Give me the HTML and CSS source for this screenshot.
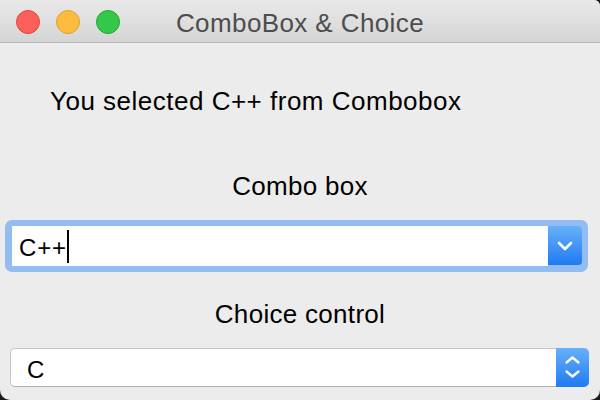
FILE: index.html
```html
<!DOCTYPE html>
<html>
<head>
<meta charset="utf-8">
<link rel="stylesheet" href="styles.css">
</head>
<body>
<div class="window">
  <div class="titlebar">
    <div class="lights">
      <span class="light red"></span>
      <span class="light yellow"></span>
      <span class="light green"></span>
    </div>
    <div class="title">ComboBox &amp; Choice</div>
    <div></div>
  </div>
  <div class="content">
    <div class="status">You selected C++ from Combobox</div>
    <div class="label combo-label">Combo box</div>
    <div class="combo-ring">
      <div class="combo-field">
        <span class="combo-text">C++</span><span class="caret"></span>
      </div>
      <div class="combo-btn">
        <svg width="34" height="39" viewBox="0 0 34 39"><path d="M11 17 L17 23 L23 17" fill="none" stroke="#fff" stroke-width="2.6" stroke-linecap="round" stroke-linejoin="round"/></svg>
      </div>
    </div>
    <div class="label choice-label">Choice control</div>
    <div class="choice">
      <div class="choice-field"><span class="choice-text">C</span></div>
      <div class="choice-btn">
        <svg width="33" height="39" viewBox="0 0 33 39"><path d="M10.5 14.5 L16.5 9.5 L22.5 14.5 M10.5 23.5 L16.5 28.5 L22.5 23.5" fill="none" stroke="#fff" stroke-width="2.3" stroke-linecap="round" stroke-linejoin="round"/></svg>
      </div>
    </div>
  </div>
</div>
</body>
</html>
```
FILE: styles.css
```css
html, body {
  margin: 0;
  padding: 0;
  background: #1c1c1c;
}
body {
  width: 600px;
  height: 400px;
  overflow: hidden;
  font-family: "Liberation Sans", Arial, sans-serif;
}
.window {
  width: 600px;
  height: 400px;
  background: #ececec;
  border-radius: 0 6px 10px 10px;
  overflow: hidden;
  display: flex;
  flex-direction: column;
}
.titlebar {
  height: 42px;
  border-bottom: 1px solid #b6b6b6;
  background: linear-gradient(#e9e9e9, #d5d5d5);
  display: grid;
  grid-template-columns: 1fr auto 1fr;
  align-items: center;
}
.lights {
  display: flex;
  gap: 16px;
  padding-left: 16px;
  padding-top: 2px;
}
.light {
  width: 24px;
  height: 24px;
  border-radius: 50%;
  box-sizing: border-box;
}
.red { background: #fc605b; border: 1px solid #e0443e; }
.yellow { background: #fdbc40; border: 1px solid #dea123; }
.green { background: #34c84a; border: 1px solid #24a732; }
.title {
  font-size: 26px;
  letter-spacing: 0.4px;
  color: #4d4d4d;
  line-height: 30px;
  padding-top: 3px;
}
.content {
  display: flex;
  flex-direction: column;
}
.status {
  font-size: 26px;
  letter-spacing: 0.5px;
  line-height: 30px;
  margin: 43px 0 0 50px;
  color: #000;
}
.label {
  font-size: 26px;
  letter-spacing: 0.3px;
  line-height: 30px;
  text-align: center;
  color: #000;
}
.combo-label { margin-top: 55px; }
.combo-ring {
  margin: 19px 0 0 5px;
  width: 583px;
  height: 52px;
  box-sizing: border-box;
  padding: 6px 6px 6px 7px;
  background: #93bdf0;
  border-radius: 7px;
  display: flex;
}
.combo-field {
  flex: 1;
  height: 40px;
  background: #fff;
  display: flex;
  align-items: flex-start;
  padding-left: 7px;
}
.combo-text {
  font-size: 24px;
  letter-spacing: 0.8px;
  line-height: 28px;
  margin-top: 8px;
  color: #000;
}
.caret {
  width: 2px;
  height: 33px;
  background: #000;
  margin-top: 4px;
  margin-left: 0px;
}
.combo-btn {
  width: 34px;
  height: 39px;
  background: linear-gradient(#68b0f9, #1f7bf3);
  border-radius: 0 4px 4px 0;
}
.combo-btn svg, .choice-btn svg { display: block; }
.choice-label { margin-top: 27px; }
.choice {
  margin: 19px 0 0 10px;
  width: 579px;
  height: 39px;
  display: flex;
}
.choice-field {
  flex: 1;
  background: #fff;
  border: 1px solid #c6c6c6;
  border-bottom-color: #b0b0b0;
  border-right: none;
  border-radius: 5px 0 0 5px;
  display: flex;
  align-items: center;
  padding-left: 16px;
  padding-top: 4px;
  box-sizing: border-box;
}
.choice-text {
  font-size: 24px;
  line-height: 28px;
  color: #000;
}
.choice-btn {
  width: 33px;
  height: 39px;
  background: linear-gradient(#68b0f9, #1f7bf3);
  border-radius: 0 5px 5px 0;
}
```
